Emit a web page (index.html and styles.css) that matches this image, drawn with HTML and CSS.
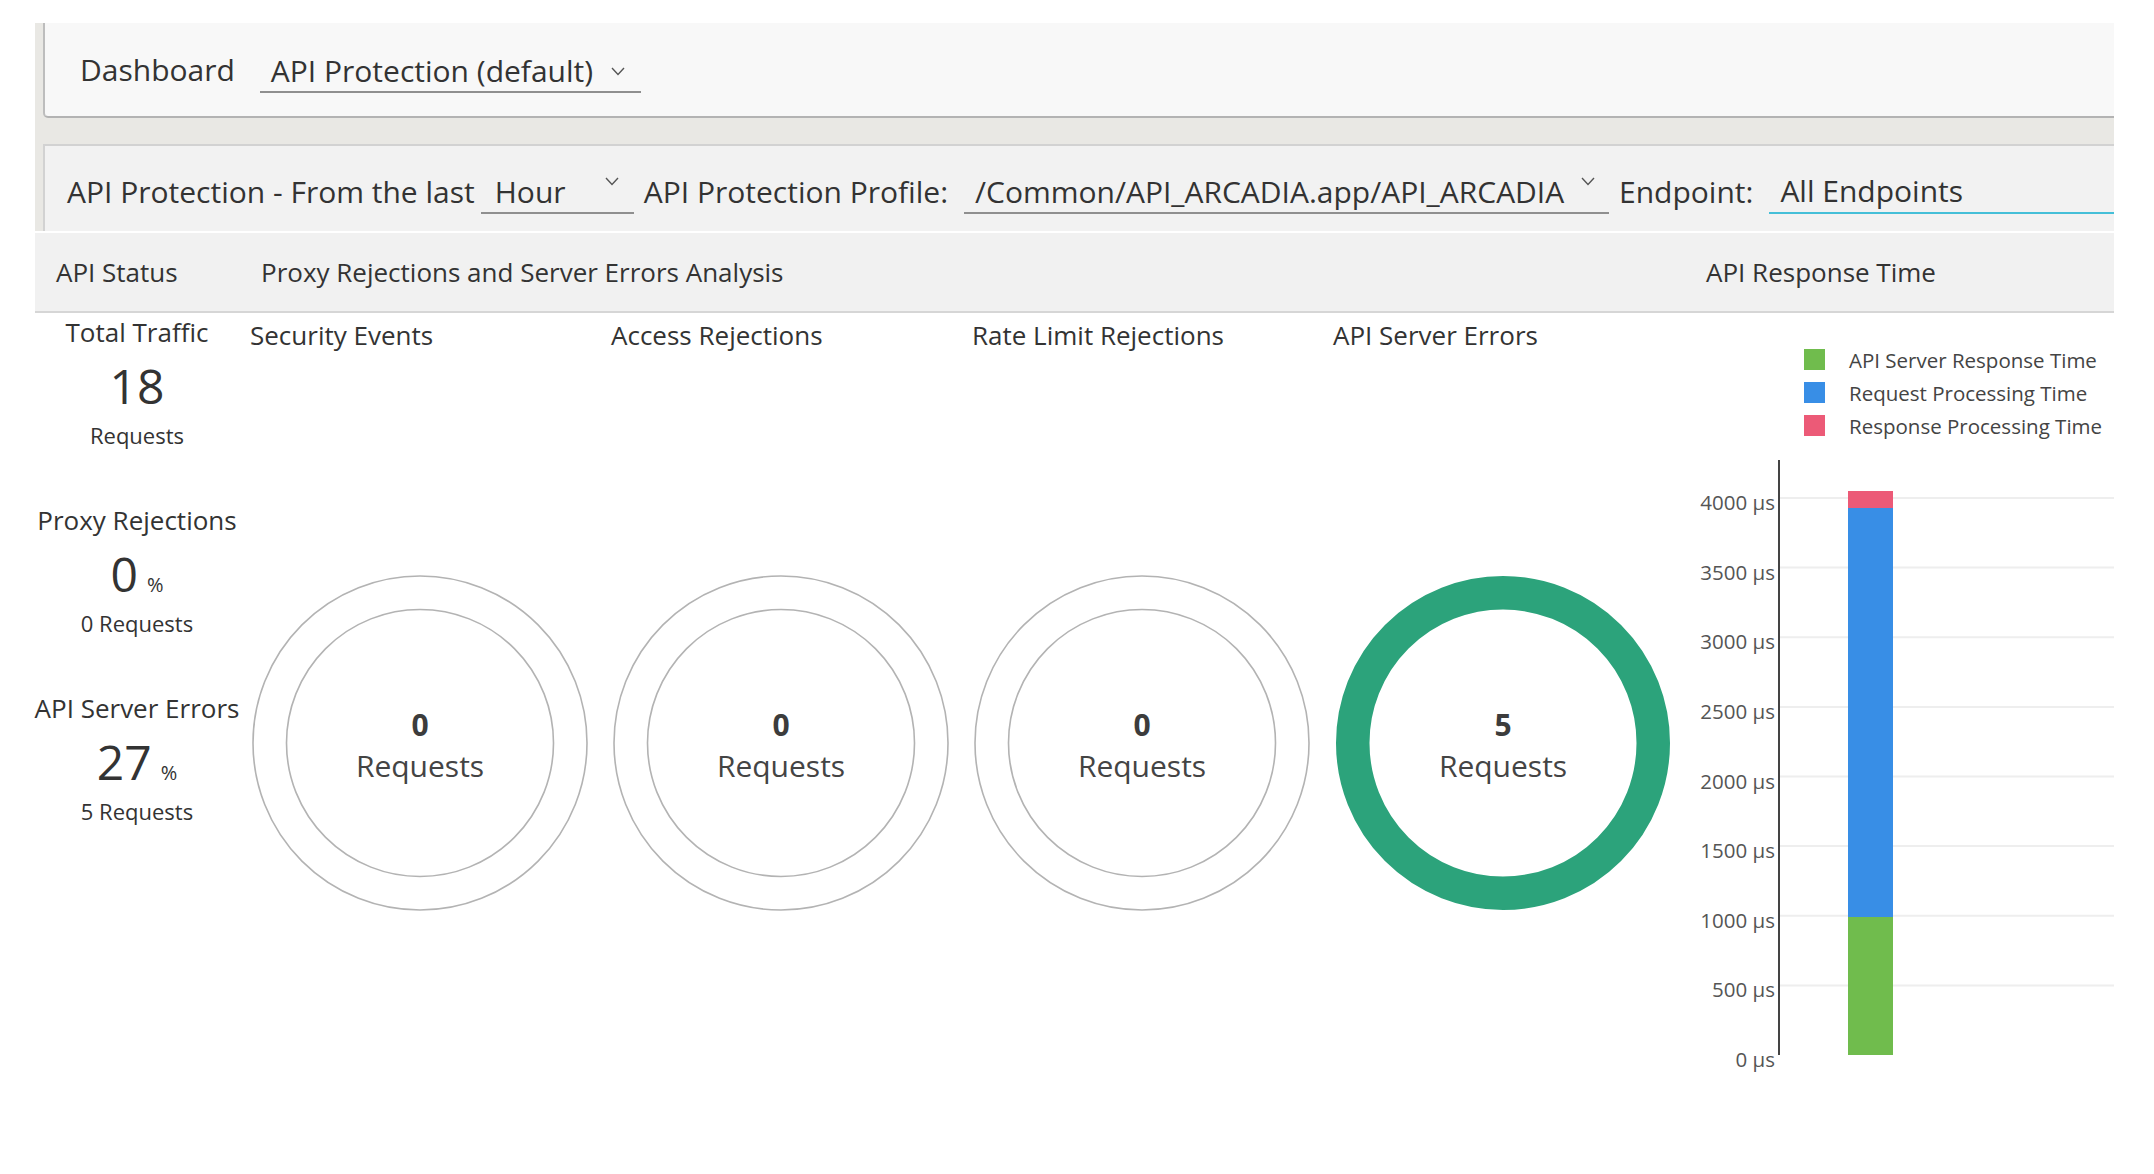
FILE: index.html
```html
<!DOCTYPE html>
<html lang="en">
<head>
<meta charset="utf-8">
<title>API Protection Dashboard</title>
<link rel="stylesheet" href="styles.css">
</head>
<body>
<div class="page">
  <div class="toolbar">
    <div class="dash-box">
      <span class="dash-label">Dashboard</span>
      <div class="select select-dash">
        <span>API Protection (default)</span>
        <svg class="chev" width="14" height="9" viewBox="0 0 14 9"><polyline points="1,1 7,7.5 13,1" /></svg>
      </div>
    </div>
    <div class="filter-box">
      <span class="flabel">API Protection - From the last</span>
      <div class="select select-hour">
        <span>Hour</span>
        <svg class="chev chev-up" width="14" height="9" viewBox="0 0 14 9"><polyline points="1,1 7,7.5 13,1" /></svg>
      </div>
      <span class="flabel gap-l">API Protection Profile:</span>
      <div class="select select-profile">
        <span>/Common/API_ARCADIA.app/API_ARCADIA</span>
        <svg class="chev chev-up" width="14" height="9" viewBox="0 0 14 9"><polyline points="1,1 7,7.5 13,1" /></svg>
      </div>
      <span class="flabel gap-l">Endpoint:</span>
      <div class="endpoint">All Endpoints</div>
    </div>
  </div>

  <div class="panel">
    <div class="panel-head">
      <div class="h-status">API Status</div>
      <div class="h-analysis">Proxy Rejections and Server Errors Analysis</div>
      <div class="h-resp">API Response Time</div>
    </div>
    <div class="panel-body">
      <div class="status">
        <div class="stat">
          <div class="stat-title">Total Traffic</div>
          <div class="stat-num">18</div>
          <div class="stat-sub">Requests</div>
        </div>
        <div class="stat">
          <div class="stat-title">Proxy Rejections</div>
          <div class="stat-num">0<span class="pct">%</span></div>
          <div class="stat-sub">0 Requests</div>
        </div>
        <div class="stat">
          <div class="stat-title">API Server Errors</div>
          <div class="stat-num">27<span class="pct">%</span></div>
          <div class="stat-sub">5 Requests</div>
        </div>
      </div>

      <div class="analysis">
        <div class="acol">
          <div class="acol-title">Security Events</div>
          <svg class="donut" width="340" height="340" viewBox="0 0 340 340">
            <circle class="ring" cx="170" cy="170" r="167" />
            <circle class="ring" cx="170" cy="170" r="133.5" />
            <text class="d-num" x="170" y="151">0</text>
            <text class="d-lbl" x="170" y="192">Requests</text>
          </svg>
        </div>
        <div class="acol">
          <div class="acol-title">Access Rejections</div>
          <svg class="donut" width="340" height="340" viewBox="0 0 340 340">
            <circle class="ring" cx="170" cy="170" r="167" />
            <circle class="ring" cx="170" cy="170" r="133.5" />
            <text class="d-num" x="170" y="151">0</text>
            <text class="d-lbl" x="170" y="192">Requests</text>
          </svg>
        </div>
        <div class="acol">
          <div class="acol-title">Rate Limit Rejections</div>
          <svg class="donut" width="340" height="340" viewBox="0 0 340 340">
            <circle class="ring" cx="170" cy="170" r="167" />
            <circle class="ring" cx="170" cy="170" r="133.5" />
            <text class="d-num" x="170" y="151">0</text>
            <text class="d-lbl" x="170" y="192">Requests</text>
          </svg>
        </div>
        <div class="acol">
          <div class="acol-title">API Server Errors</div>
          <svg class="donut" width="340" height="340" viewBox="0 0 340 340">
            <circle class="ring-fill" cx="170" cy="170" r="150.25" />
            <text class="d-num" x="170" y="151">5</text>
            <text class="d-lbl" x="170" y="192">Requests</text>
          </svg>
        </div>
      </div>

      <div class="resp">
        <div class="legend">
          <div class="lg-row"><span class="sw sw-green"></span><span>API Server Response Time</span></div>
          <div class="lg-row"><span class="sw sw-blue"></span><span>Request Processing Time</span></div>
          <div class="lg-row"><span class="sw sw-red"></span><span>Response Processing Time</span></div>
        </div>
        <svg class="chart" width="420" height="640" viewBox="0 0 420 640">
          <g class="grid">
            <line x1="86" x2="420" y1="49" y2="49" />
            <line x1="86" x2="420" y1="118.6" y2="118.6" />
            <line x1="86" x2="420" y1="188.2" y2="188.2" />
            <line x1="86" x2="420" y1="257.9" y2="257.9" />
            <line x1="86" x2="420" y1="327.5" y2="327.5" />
            <line x1="86" x2="420" y1="397.1" y2="397.1" />
            <line x1="86" x2="420" y1="466.8" y2="466.8" />
            <line x1="86" x2="420" y1="536.4" y2="536.4" />
          </g>
          <g class="ticks">
            <text x="81" y="53">4000 µs</text>
            <text x="81" y="122.6">3500 µs</text>
            <text x="81" y="192.2">3000 µs</text>
            <text x="81" y="261.9">2500 µs</text>
            <text x="81" y="331.5">2000 µs</text>
            <text x="81" y="401.1">1500 µs</text>
            <text x="81" y="470.8">1000 µs</text>
            <text x="81" y="540.4">500 µs</text>
            <text x="81" y="610">0 µs</text>
          </g>
          <rect class="bar-red" x="154" y="42" width="45" height="17" />
          <rect class="bar-blue" x="154" y="59" width="45" height="409" />
          <rect class="bar-green" x="154" y="468" width="45" height="138" />
          <line class="axis" x1="85" x2="85" y1="11" y2="606" />
        </svg>
      </div>
    </div>
  </div>
</div>
</body>
</html>
```
FILE: styles.css
```css
* { box-sizing: border-box; }

body {
  margin: 0;
  background: #ffffff;
  font-family: "Open Sans", "Noto Sans", sans-serif;
  color: #333333;
}

.page {
  padding: 23px 40px 0 35px;
}

/* ---------- toolbar ---------- */
.toolbar {
  background: #e9e8e4;
  padding-left: 8px;
}

.dash-box {
  height: 95px;
  background: #f8f8f8;
  border-left: 2px solid #bdbdbd;
  border-bottom: 2px solid #b3b3b3;
  border-bottom-left-radius: 5px;
  display: flex;
  align-items: center;
  padding-left: 35px;
}

.dash-label {
  font-size: 30px;
  line-height: 40px;
  margin-right: 25px;
}

.select {
  display: flex;
  align-items: center;
  justify-content: space-between;
  height: 42px;
  border-bottom: 2px solid #8f8f8f;
  font-size: 30px;
  line-height: 40px;
  white-space: nowrap;
}

.select-dash {
  width: 381px;
  padding: 0 16px 0 11px;
  align-self: flex-end;
  margin-bottom: 23px;
}

.chev polyline {
  fill: none;
  stroke: #555555;
  stroke-width: 1.4;
}

.chev-up {
  align-self: flex-start;
  margin-top: 5px;
}

.filter-box {
  margin-top: 26px;
  height: 87px;
  background: #f2f2f2;
  border-top: 2px solid #d2d2d2;
  border-left: 2px solid #d2d2d2;
  display: flex;
  align-items: flex-end;
  padding: 0 0 17px 22px;
}

.flabel {
  font-size: 30px;
  line-height: 40px;
  height: 42px;
  white-space: nowrap;
}

.gap-l {
  margin-left: 10px;
}

.select-hour {
  width: 153px;
  margin-left: 6px;
  padding: 0 15px 0 14px;
}

.select-profile {
  width: 645px;
  margin-left: 16px;
  padding: 0 14px 0 11px;
}

.endpoint {
  flex: 1;
  margin-left: 16px;
  height: 42px;
  padding-left: 11px;
  font-size: 30px;
  line-height: 38px;
  border-bottom: 2px solid #45bfd8;
  white-space: nowrap;
}

/* ---------- panel ---------- */
.panel {
  margin-top: 2px;
}

.panel-head {
  display: grid;
  grid-template-columns: 215px 1444px 1fr;
  align-items: center;
  height: 80px;
  background: #f1f1f1;
  border-bottom: 2px solid #d6d6d6;
  font-size: 26px;
  line-height: 34px;
}

.h-status { padding-left: 21px; }
.h-analysis { padding-left: 11px; }
.h-resp { padding-left: 12px; }

.panel-body {
  display: grid;
  grid-template-columns: 215px 1444px 1fr;
  height: 861px;
}

/* status column */
.status {
  padding: 2px 11px 0 0;
  text-align: center;
  white-space: nowrap;
}

.stat {
  margin-bottom: 56px;
}

.stat-title {
  font-size: 26px;
  line-height: 34px;
  margin: 0 -12px;
}

.stat-num {
  font-size: 48px;
  line-height: 74px;
}

.pct {
  font-size: 20px;
  line-height: 0;
  margin-left: 9px;
}

.stat-sub {
  font-size: 22px;
  line-height: 24px;
}

/* analysis columns */
.analysis {
  display: grid;
  grid-template-columns: repeat(4, 361px);
}

.acol-title {
  margin-top: 5px;
  font-size: 26px;
  line-height: 34px;
}

.donut {
  display: block;
  margin-top: 221px;
}

.ring {
  fill: none;
  stroke: #b3b3b3;
  stroke-width: 1.6;
}

.ring-fill {
  fill: none;
  stroke: #2ca37b;
  stroke-width: 33.5;
}

.d-num {
  font-family: "Open Sans", "Noto Sans", sans-serif;
  font-size: 30px;
  font-weight: 700;
  fill: #3c3c3c;
  text-anchor: middle;
  dominant-baseline: central;
}

.d-lbl {
  font-family: "Open Sans", "Noto Sans", sans-serif;
  font-size: 30px;
  fill: #444444;
  text-anchor: middle;
  dominant-baseline: central;
}

/* response time column */
.legend {
  margin: 30px 0 0 110px;
}

.lg-row {
  display: flex;
  align-items: center;
  height: 33px;
  font-size: 20.5px;
  color: #444444;
  white-space: nowrap;
}

.sw {
  width: 21px;
  height: 21px;
  margin-right: 24px;
}

.sw-green { background: #70bc4d; }
.sw-blue { background: #388ee6; }
.sw-red { background: #ec5a77; }

.chart {
  display: block;
  margin-top: 7px;
}

.grid line {
  stroke: #eeeeee;
  stroke-width: 2;
}

.ticks text {
  font-family: "Open Sans", "Noto Sans", sans-serif;
  font-size: 20.5px;
  fill: #555555;
  text-anchor: end;
  dominant-baseline: central;
}

.axis {
  stroke: #444444;
  stroke-width: 2;
}

.bar-red { fill: #ec5a77; }
.bar-blue { fill: #388ee6; }
.bar-green { fill: #70bc4d; }
```
